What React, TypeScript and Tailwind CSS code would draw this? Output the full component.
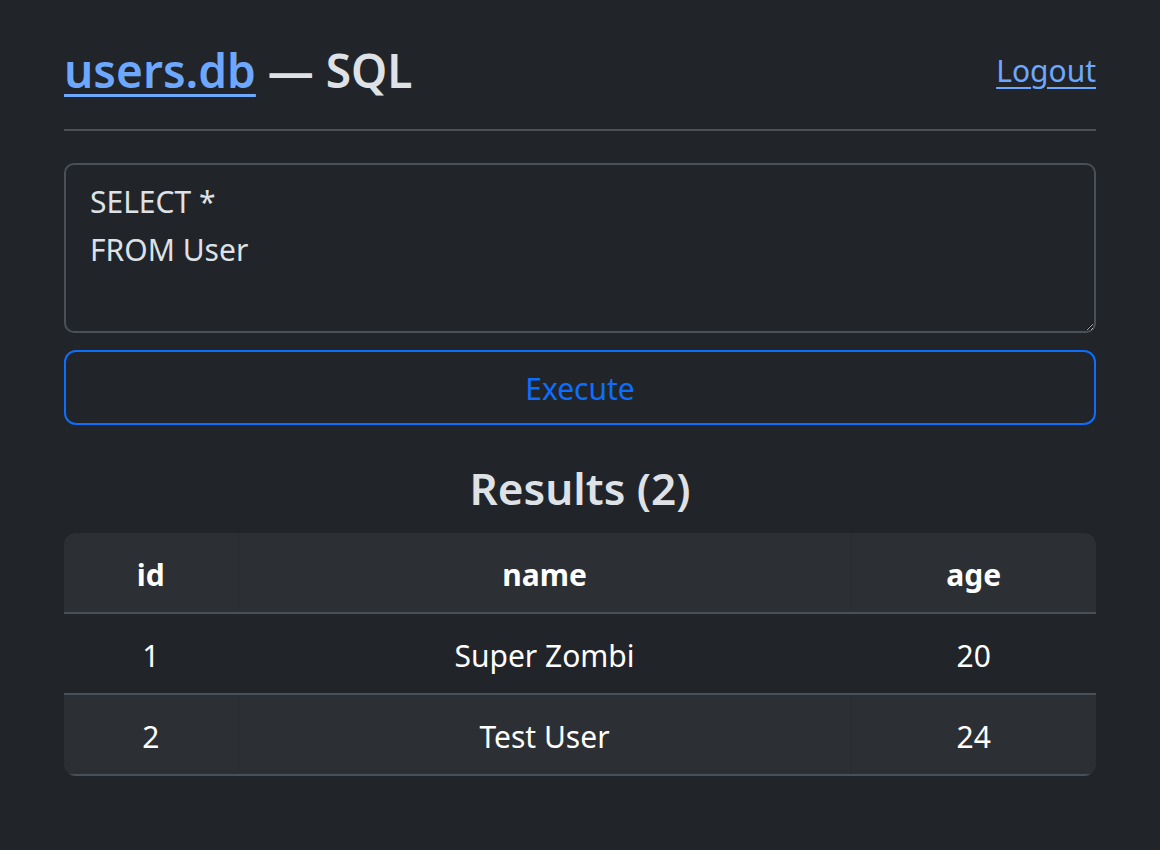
const rows = [
  { id: 1, name: "Super Zombi", age: 20 },
  { id: 2, name: "Test User", age: 24 },
];

export default function App() {
  return (
    <div
      className="min-h-[850px] bg-[#212529] text-[#dee2e6] px-[64px] pt-[38px]"
      style={{ fontFamily: '"Noto Sans", "Open Sans", sans-serif' }}
    >
      <div className="flex items-center justify-between h-[64px]">
        <h1 className="text-[46px] font-semibold leading-none">
          <a href="#" className="text-[#6ea8fe] underline underline-offset-[6px] decoration-[3px]">
            users.db
          </a>{" "}
          — SQL
        </h1>
        <a href="#" className="text-[30px] text-[#6ea8fe] underline underline-offset-[5px] decoration-[2px]">
          Logout
        </a>
      </div>

      <hr className="mt-[27px] border-t-2 border-[#4d5155]" />

      <textarea
        className="mt-[32px] block w-full h-[170px] resize-y rounded-[10px] border-2 border-[#495057] bg-[#212529] px-[24px] pt-[13px] pb-[12px] text-[30px] leading-[48px] text-[#dee2e6] outline-none"
        defaultValue={"SELECT *\nFROM User"}
      />

      <button className="mt-[17px] w-full h-[75px] rounded-[12px] border-2 border-[#0d6efd] pt-[2px] text-[30px] text-[#0d6efd]">
        Execute
      </button>

      <h3 className="mt-[33px] text-center text-[44px] font-semibold leading-[60px]">
        Results ({rows.length})
      </h3>

      <div className="mt-[15px] overflow-hidden rounded-[12px]">
        <table className="w-full table-fixed border-collapse text-[30px] text-white">
          <colgroup>
            <col className="w-[174px]" />
            <col className="w-[613px]" />
            <col className="w-[245px]" />
          </colgroup>
          <thead>
            <tr className="bg-[#2c3034] border-b-2 border-[#495057]">
              <th className="h-[80px] pt-[4px] font-bold border-r border-[#292d31]">id</th>
              <th className="h-[80px] pt-[4px] font-bold border-r border-[#292d31]">name</th>
              <th className="h-[80px] pt-[4px] font-bold">age</th>
            </tr>
          </thead>
          <tbody>
            {rows.map((r, i) => {
              const striped = i % 2 === 1;
              const sep = striped ? "border-r border-[#292d31]" : "border-r border-[#212529]";
              return (
                <tr
                  key={r.id}
                  className={`border-b-2 border-[#495057] ${striped ? "bg-[#2c3034]" : "bg-[#212529]"}`}
                >
                  <td className={`h-[81px] pt-[4px] text-center ${sep}`}>{r.id}</td>
                  <td className={`h-[81px] pt-[4px] text-center ${sep}`}>{r.name}</td>
                  <td className="h-[81px] pt-[4px] text-center">{r.age}</td>
                </tr>
              );
            })}
          </tbody>
        </table>
      </div>
    </div>
  );
}
